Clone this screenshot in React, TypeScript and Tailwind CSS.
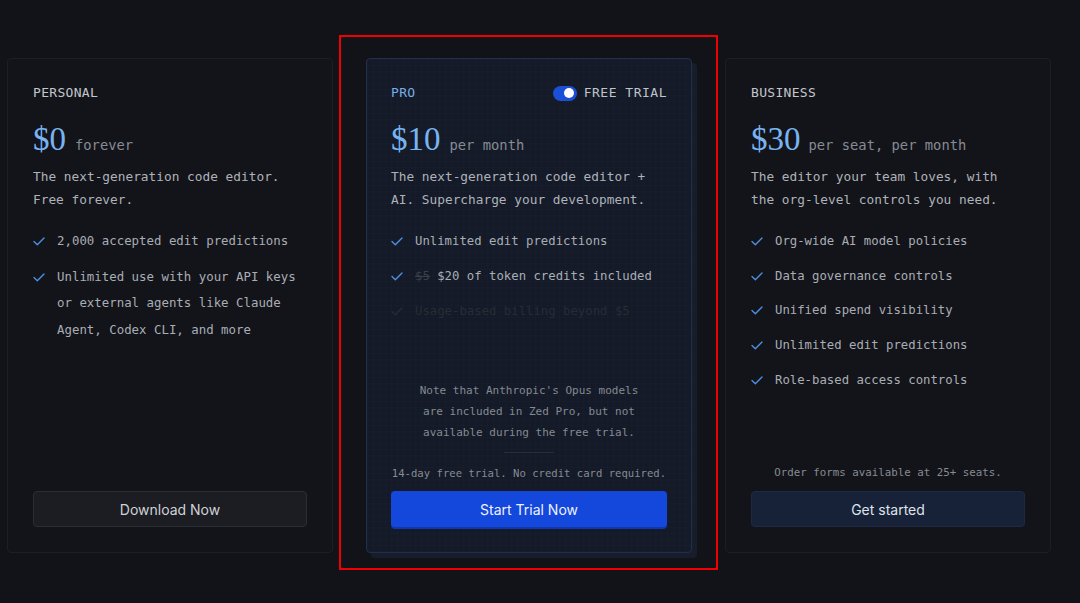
import React from "react";

const mono = "font-['DejaVu_Sans_Mono','Liberation_Mono',monospace]";
const serif = "font-['Liberation_Serif','DejaVu_Serif',serif]";
const sans = "font-['Inter','Noto_Sans',sans-serif]";

function Check({ faded }: { faded?: boolean }) {
  return (
    <svg width="12" height="9" viewBox="0 0 12 9" className="shrink-0 mt-[9px]">
      <path
        d="M1 4.6 L4.3 7.8 L11 1"
        fill="none"
        stroke={faded ? "#262b35" : "#4c8fe3"}
        strokeWidth="1.4"
        strokeLinecap="round"
        strokeLinejoin="round"
      />
    </svg>
  );
}

function Feature({ children, faded }: { children: React.ReactNode; faded?: boolean }) {
  return (
    <li className="flex gap-[12px]">
      <Check faded={faded} />
      <span className={faded ? "text-[#272c36]" : "text-[#a9adb5]"}>{children}</span>
    </li>
  );
}

export default function App() {
  return (
    <div className={`relative w-[1080px] h-[603px] bg-[#121318] overflow-hidden ${mono}`}>
      <div className="flex gap-[33px] pl-[7px] pt-[58px]">
        {/* Personal */}
        <div className="w-[326px] h-[495px] rounded-[4px] border border-[#1c1e24] bg-[#131419] flex flex-col px-[25px] pt-[24px] pb-[25px]">
          <div className="text-[13px] leading-[20px] text-[#c3c6cc] tracking-[0.3px]">PERSONAL</div>
          <div className="mt-[16px] flex items-baseline gap-[9px] h-[40px]">
            <span className={`${serif} text-[33px] leading-[40px] text-[#79b4f2]`}>$0</span>
            <span className="text-[13.8px] text-[#868b94]">forever</span>
          </div>
          <p className="mt-[6px] text-[12.8px] leading-[23px] text-[#aeb2ba]">
            The next-generation code editor.
            <br />
            Free forever.
          </p>
          <ul className="mt-[17px] flex flex-col gap-[9px] text-[12.4px] leading-[26.5px]">
            <Feature>2,000 accepted edit predictions</Feature>
            <Feature>Unlimited use with your API keys or external agents like Claude Agent, Codex CLI, and more</Feature>
          </ul>
          <div className="mt-auto">
            <button className={`${sans} w-full h-[36px] rounded-[4px] border border-[#2a2d34] bg-[#1b1d22] text-[14px] text-[#cfd2d8]`}>
              Download Now
            </button>
          </div>
        </div>

        {/* Pro */}
        <div className="relative w-[326px] h-[495px] rounded-[4px] border border-[#21304a] bg-[#141a27] bg-[linear-gradient(rgba(255,255,255,0.008)_1px,transparent_1px),linear-gradient(90deg,rgba(255,255,255,0.008)_1px,transparent_1px)] bg-[size:6px_6px] shadow-[5px_5px_0_0_#171d2a] flex flex-col px-[24px] pt-[24px] pb-[25px]">
          <div className="flex items-center justify-between h-[20px]">
            <span className="text-[13px] text-[#78aee6] tracking-[0.3px]">PRO</span>
            <div className="flex items-center gap-[7px]">
              <span className="relative w-[24px] h-[15px] rounded-full bg-[#1c4fd8]">
                <span className="absolute right-[3px] top-[2.5px] w-[10px] h-[10px] rounded-full bg-white" />
              </span>
              <span className="text-[13px] text-[#bfc3ca] tracking-[0.5px]">FREE TRIAL</span>
            </div>
          </div>
          <div className="mt-[16px] flex items-baseline gap-[9px] h-[40px]">
            <span className={`${serif} text-[33px] leading-[40px] text-[#79b4f2]`}>$10</span>
            <span className="text-[13.8px] text-[#868b94]">per month</span>
          </div>
          <p className="mt-[6px] text-[12.8px] leading-[23px] text-[#aeb2ba]">
            The next-generation code editor +
            <br />
            AI. Supercharge your development.
          </p>
          <ul className="mt-[17px] flex flex-col gap-[9px] text-[12.3px] leading-[26px]">
            <Feature>Unlimited edit predictions</Feature>
            <Feature>
              <span className="line-through text-[#3b404b]">$5</span> $20 of token credits included
            </Feature>
            <Feature faded>Usage-based billing beyond $5</Feature>
          </ul>
          <div className="mt-auto flex flex-col items-center">
            <p className="text-center text-[11px] leading-[21px] text-[#858a93]">
              Note that Anthropic's Opus models
              <br />
              are included in Zed Pro, but not
              <br />
              available during the free trial.
            </p>
            <div className="mt-[9px] w-[50px] h-px bg-[#272c37]" />
            <p className="mt-[11px] text-[10.6px] leading-[18px] text-[#868b94]">14-day free trial. No credit card required.</p>
            <button className={`${sans} mt-[9px] w-full h-[36px] rounded-[4px] bg-[#1447dc] shadow-[0_2px_0_0_#0f38b0] text-[14px] text-[#eef2ff]`}>
              Start Trial Now
            </button>
          </div>
        </div>

        {/* Business */}
        <div className="w-[326px] h-[495px] rounded-[4px] border border-[#1c1e24] bg-[#131419] flex flex-col px-[25px] pt-[24px] pb-[25px]">
          <div className="text-[13px] leading-[20px] text-[#c3c6cc] tracking-[0.3px]">BUSINESS</div>
          <div className="mt-[16px] flex items-baseline gap-[8px] h-[40px]">
            <span className={`${serif} text-[33px] leading-[40px] text-[#79b4f2]`}>$30</span>
            <span className="text-[13.8px] text-[#868b94]">per seat, per month</span>
          </div>
          <p className="mt-[6px] text-[12.8px] leading-[23px] text-[#aeb2ba]">
            The editor your team loves, with
            <br />
            the org-level controls you need.
          </p>
          <ul className="mt-[17px] flex flex-col gap-[8.7px] text-[12.3px] leading-[26px]">
            <Feature>Org-wide AI model policies</Feature>
            <Feature>Data governance controls</Feature>
            <Feature>Unified spend visibility</Feature>
            <Feature>Unlimited edit predictions</Feature>
            <Feature>Role-based access controls</Feature>
          </ul>
          <div className="mt-auto flex flex-col items-center">
            <p className="text-[10.8px] leading-[18px] text-[#868b94]">Order forms available at 25+ seats.</p>
            <button className={`${sans} mt-[9px] w-full h-[36px] rounded-[4px] border border-[#1f2a42] bg-[#172138] text-[14px] text-[#dfe3ea]`}>
              Get started
            </button>
          </div>
        </div>
      </div>

      {/* annotation box */}
      <div className="absolute left-[339px] top-[35px] w-[379px] h-[535px] border-2 border-[#f00000] pointer-events-none" />
    </div>
  );
}
